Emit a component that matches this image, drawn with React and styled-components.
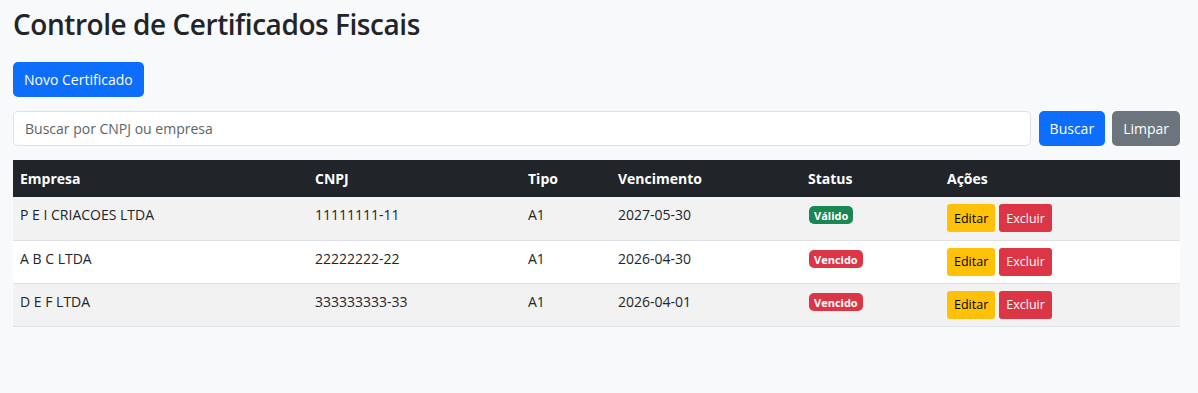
import styled, { createGlobalStyle } from "styled-components";

const GlobalStyle = createGlobalStyle`
    html, body {
        margin: 0;
        background: #f8f9fa;
    }
    body {
        font-family: "Open Sans", "Liberation Sans", sans-serif;
        font-size: 14px;
        color: #212529;
    }
`;

const Page = styled.div`
    padding: 0 18px 0 13px;
`;

const Title = styled.h1`
    font-size: 28px;
    font-weight: 600;
    line-height: 43px;
    margin: 0 0 16px;
    padding-top: 3px;
    letter-spacing: -0.45px;
`;

const Button = styled.button`
    font-family: inherit;
    font-size: ${(p) => (p.$small ? "12.5px" : "14px")};
    height: ${(p) => (p.$small ? "28px" : "35px")};
    padding: ${(p) => (p.$small ? "0 7px" : "0 11px")};
    border: none;
    border-radius: ${(p) => (p.$small ? "3px" : "5px")};
    background: ${(p) => p.$bg};
    color: ${(p) => p.$fg || "#fff"};
    cursor: pointer;
`;

const Toolbar = styled.div`
    margin-bottom: 14px;
`;

const SearchRow = styled.div`
    display: flex;
    gap: 7px;
    margin-bottom: 14px;
`;

const SearchInput = styled.input`
    flex: 1;
    height: 35px;
    box-sizing: border-box;
    padding: 0 11px;
    margin-right: 1px;
    border: 1px solid #dee2e6;
    border-radius: 5px;
    background: #fff;
    font-family: inherit;
    font-size: 14px;
    color: #212529;
    &::placeholder {
        color: #5c636a;
    }
`;

const Table = styled.table`
    width: 100%;
    border-collapse: collapse;
    table-layout: fixed;
    vertical-align: top;
`;

const Th = styled.th`
    background: #212529;
    color: #fff;
    text-align: left;
    font-weight: 700;
    padding: 7px;
    height: 37px;
    box-sizing: border-box;
    line-height: 22px;
`;

const Row = styled.tr`
    background: ${(p) => (p.$striped ? "#f2f2f2" : "#fff")};
    border-bottom: 1px solid #dee2e6;
`;

const Td = styled.td`
    padding: 7px;
    height: 43px;
    box-sizing: border-box;
    line-height: 22px;
    vertical-align: top;
`;

const Badge = styled.span`
    display: inline-block;
    font-size: 11px;
    font-weight: 700;
    line-height: 1;
    padding: 4px 5px 3px;
    border-radius: 5px;
    color: #fff;
    background: ${(p) => (p.$ok ? "#198754" : "#dc3545")};
    margin-left: 1px;
`;

const Actions = styled.div`
    display: flex;
    gap: 4px;
`;

const certificados = [
    { empresa: "P E I CRIACOES LTDA", cnpj: "11111111-11", tipo: "A1", venc: "2027-05-30", ok: true },
    { empresa: "A B C LTDA", cnpj: "22222222-22", tipo: "A1", venc: "2026-04-30", ok: false },
    { empresa: "D E F LTDA", cnpj: "333333333-33", tipo: "A1", venc: "2026-04-01", ok: false },
];

const App = () => (
    <Page>
        <GlobalStyle />
        <Title>Controle de Certificados Fiscais</Title>
        <Toolbar>
            <Button $bg="#0d6efd">Novo Certificado</Button>
        </Toolbar>
        <SearchRow>
            <SearchInput placeholder="Buscar por CNPJ ou empresa" />
            <Button $bg="#0d6efd">Buscar</Button>
            <Button $bg="#6c757d">Limpar</Button>
        </SearchRow>
        <Table>
            <colgroup>
                <col style={{ width: 295 }} />
                <col style={{ width: 213 }} />
                <col style={{ width: 90 }} />
                <col style={{ width: 190 }} />
                <col style={{ width: 139 }} />
                <col />
            </colgroup>
            <thead>
                <tr>
                    <Th>Empresa</Th>
                    <Th>CNPJ</Th>
                    <Th>Tipo</Th>
                    <Th>Vencimento</Th>
                    <Th>Status</Th>
                    <Th>Ações</Th>
                </tr>
            </thead>
            <tbody>
                {certificados.map((c, i) => (
                    <Row key={c.cnpj} $striped={i % 2 === 0}>
                        <Td>{c.empresa}</Td>
                        <Td>{c.cnpj}</Td>
                        <Td>{c.tipo}</Td>
                        <Td>{c.venc}</Td>
                        <Td>
                            <Badge $ok={c.ok}>{c.ok ? "Válido" : "Vencido"}</Badge>
                        </Td>
                        <Td>
                            <Actions>
                                <Button $small $bg="#ffc107" $fg="#000">Editar</Button>
                                <Button $small $bg="#dc3545">Excluir</Button>
                            </Actions>
                        </Td>
                    </Row>
                ))}
            </tbody>
        </Table>
    </Page>
);

export default App;
